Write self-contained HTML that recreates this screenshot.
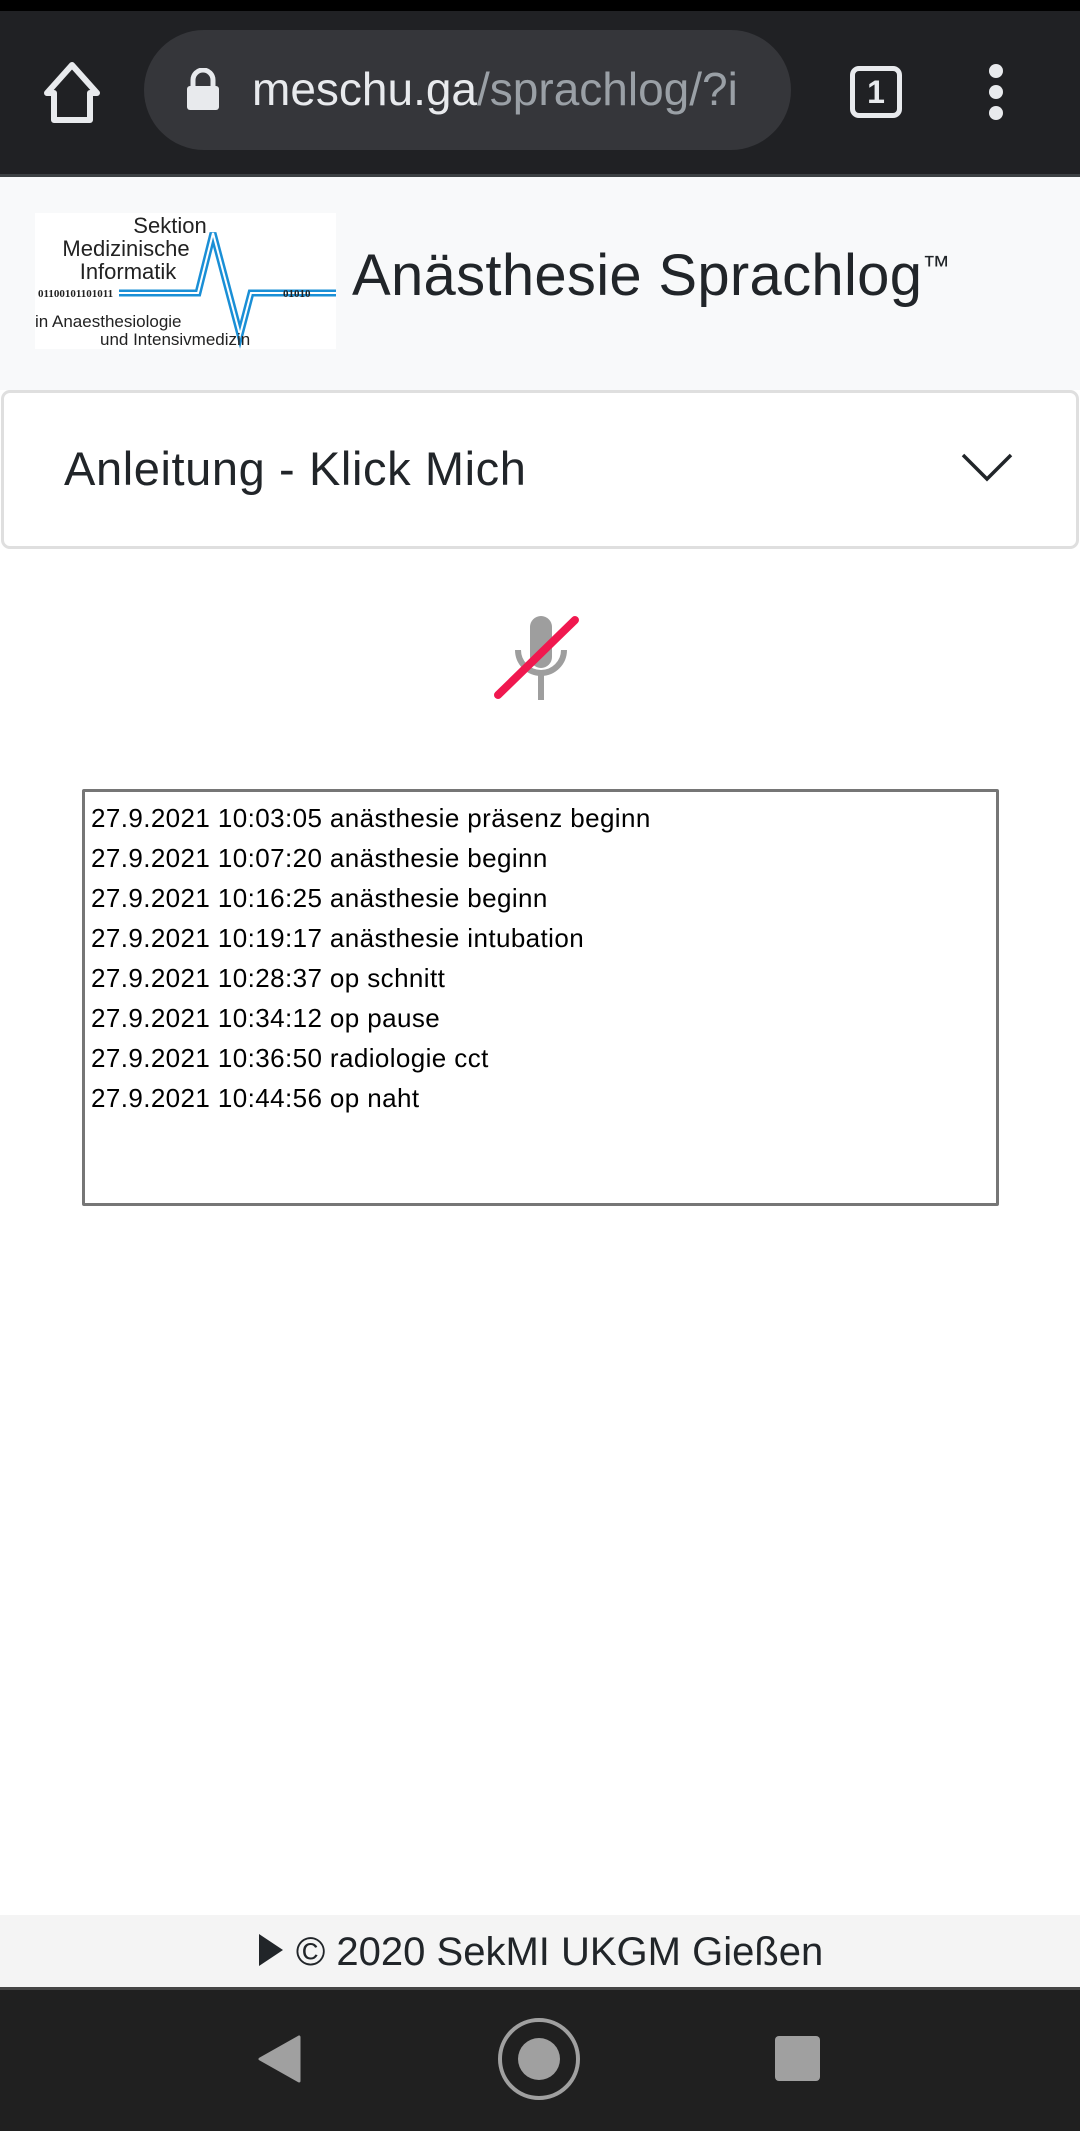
<!DOCTYPE html>
<html><head><meta charset="utf-8"><style>
*{margin:0;padding:0;box-sizing:border-box}
body{width:1080px;height:2131px;position:relative;background:#fff;font-family:"Liberation Sans",sans-serif;overflow:hidden;color:#212529}
.abs{position:absolute}
</style></head><body>
<div class="abs" style="left:0;top:0;width:1080px;height:11px;background:#000"></div>
<div class="abs" style="left:0;top:11px;width:1080px;height:164px;background:#202124"></div>
<div class="abs" style="left:0;top:174px;width:1080px;height:3px;background:#3c4043"></div>
<svg class="abs" style="left:40px;top:60px" width="64" height="66" viewBox="0 0 64 66"><path d="M32 5 L7 33 H14 V60 H50 V33 H57 Z" fill="none" stroke="#e8eaed" stroke-width="6" stroke-linejoin="round"/></svg>
<div class="abs" style="left:144px;top:30px;width:647px;height:120px;border-radius:60px;background:#35363a"></div>
<svg class="abs" style="left:184px;top:68px" width="38" height="44" viewBox="0 0 38 44"><path d="M9 18 V12 a10 10 0 0 1 20 0 V18" fill="none" stroke="#e8eaed" stroke-width="5"/><rect x="3" y="18" width="32" height="24" rx="3" fill="#e8eaed"/></svg>
<div class="abs" style="left:252px;top:62px;font-size:46px;color:#e8eaed;letter-spacing:0px;white-space:nowrap;width:525px;overflow:hidden">meschu.ga<span style="color:#9aa0a6">/sprachlog/?i</span></div>
<div class="abs" style="left:850px;top:66px;width:52px;height:52px;border:5px solid #e8eaed;border-radius:9px;color:#e8eaed;font-size:32px;font-weight:bold;text-align:center;line-height:42px">1</div>
<div class="abs" style="left:989px;top:64px;width:14px;height:14px;border-radius:50%;background:#e8eaed"></div>
<div class="abs" style="left:989px;top:85px;width:14px;height:14px;border-radius:50%;background:#e8eaed"></div>
<div class="abs" style="left:989px;top:106px;width:14px;height:14px;border-radius:50%;background:#e8eaed"></div>

<div class="abs" style="left:0;top:177px;width:1080px;height:213px;background:#f8f9fa"></div>
<div class="abs" style="left:35px;top:213px;width:301px;height:136px;background:#fff;overflow:hidden;color:#222">
<svg class="abs" style="left:0;top:0" width="301" height="136" viewBox="0 0 301 136">
<path d="M84 80 H163 L178 20 L205 122 L216 80 H301" fill="none" stroke="#1a8fd6" stroke-width="7"/>
<path d="M84 80 H163 L178 20 L205 122 L216 80 H301" fill="none" stroke="#fff" stroke-width="2"/>
<text x="3" y="84" font-size="11" font-family="Liberation Serif" font-weight="bold" fill="#222">01100101101011</text>
<text x="248" y="84" font-size="11" font-family="Liberation Serif" font-weight="bold" fill="#222">01010</text>
<text x="135" y="20" font-size="22" text-anchor="middle" fill="#222">Sektion</text>
<text x="91" y="43" font-size="22" text-anchor="middle" fill="#222">Medizinische</text>
<text x="93" y="66" font-size="22" text-anchor="middle" fill="#222">Informatik</text>
<text x="0" y="114" font-size="17" fill="#222">in Anaesthesiologie</text>
<text x="65" y="132" font-size="17" fill="#222">und Intensivmedizin</text>
</svg></div>
<div class="abs" style="left:352px;top:242px;font-size:58px;color:#212529;white-space:nowrap;letter-spacing:0.3px">Anästhesie Sprachlog<span style="font-size:28px;vertical-align:top;position:relative;top:8px">™</span></div>

<div class="abs" style="left:1px;top:390px;width:1078px;height:159px;border:3px solid #dfdfdf;border-radius:9px;background:#fff"></div>
<div class="abs" style="left:64px;top:441px;font-size:47px;color:#212529;white-space:nowrap;letter-spacing:0.6px">Anleitung - Klick Mich</div>
<svg class="abs" style="left:960px;top:450px" width="54" height="34" viewBox="0 0 54 34"><path d="M3 5 L27 29 L51 5" fill="none" stroke="#212529" stroke-width="3.5"/></svg>

<svg class="abs" style="left:490px;top:610px" width="100" height="95" viewBox="0 0 100 95">
<rect x="40" y="6" width="22" height="52" rx="11" fill="#9e9e9e"/>
<path d="M28 40 a23 23 0 0 0 46 0" fill="none" stroke="#9e9e9e" stroke-width="6"/>
<rect x="48" y="62" width="6" height="28" fill="#9e9e9e"/>
<path d="M8 85 L85 10" stroke="#f0184f" stroke-width="8" stroke-linecap="round"/>
</svg>

<div class="abs" style="left:82px;top:789px;width:917px;height:417px;border:3px solid #767676;border-radius:2px;background:#fff"></div>
<div class="abs" style="left:91px;top:798px;font-size:26px;line-height:40px;color:#000;white-space:nowrap;letter-spacing:0.4px">
27.9.2021 10:03:05 anästhesie präsenz beginn<br>27.9.2021 10:07:20 anästhesie beginn<br>27.9.2021 10:16:25 anästhesie beginn<br>27.9.2021 10:19:17 anästhesie intubation<br>27.9.2021 10:28:37 op schnitt<br>27.9.2021 10:34:12 op pause<br>27.9.2021 10:36:50 radiologie cct<br>27.9.2021 10:44:56 op naht</div>

<div class="abs" style="left:0;top:1915px;width:1080px;height:72px;background:#f4f4f4"></div>
<div class="abs" style="left:0;top:1930px;width:1080px;text-align:center;font-size:40px;color:#212529;white-space:nowrap"><svg width="28" height="34" viewBox="0 0 28 34" style="vertical-align:-2px"><path d="M2 1 L26 17 L2 33 Z" fill="#212529"/></svg> © 2020 SekMI UKGM Gießen</div>
<div class="abs" style="left:0;top:1987px;width:1080px;height:3px;background:#444"></div>
<div class="abs" style="left:0;top:1990px;width:1080px;height:141px;background:#202020"></div>
<svg class="abs" style="left:255px;top:2034px" width="50" height="50" viewBox="0 0 50 50"><path d="M44 3 L44 47 L5 25 Z" fill="#a0a0a0" stroke="#a0a0a0" stroke-width="3" stroke-linejoin="round"/></svg>
<div class="abs" style="left:498px;top:2018px;width:82px;height:82px;border:4px solid #a0a0a0;border-radius:50%"></div>
<div class="abs" style="left:518px;top:2038px;width:42px;height:42px;background:#a0a0a0;border-radius:50%"></div>
<div class="abs" style="left:775px;top:2036px;width:45px;height:45px;background:#a0a0a0;border-radius:4px"></div>
</body></html>
